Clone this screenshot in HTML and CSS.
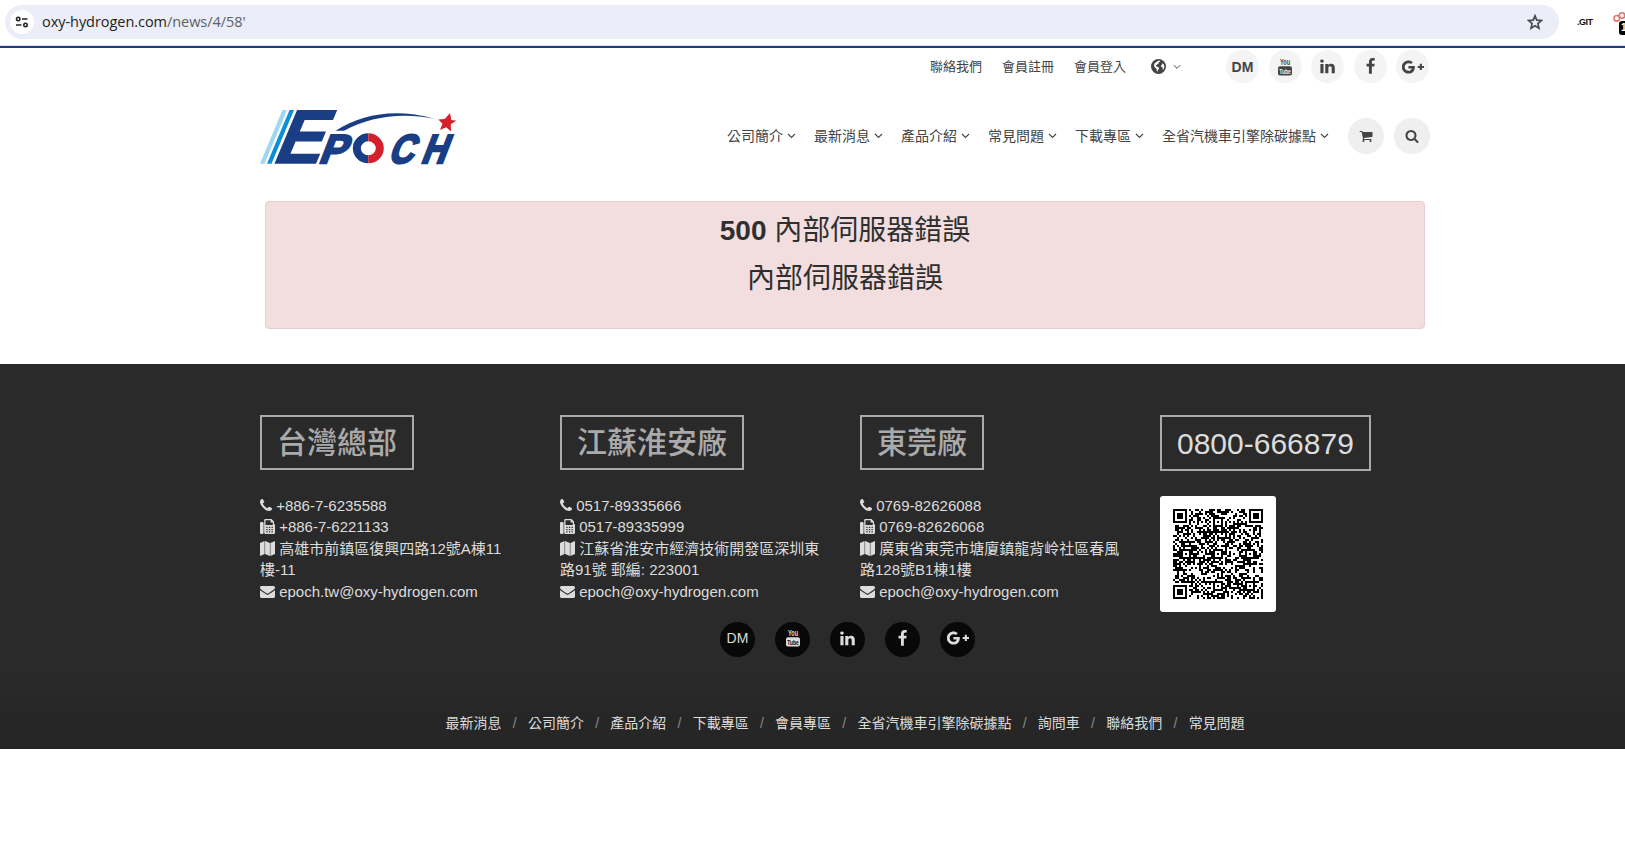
FILE: index.html
```html
<!DOCTYPE html>
<html lang="zh-Hant">
<head>
<meta charset="utf-8">
<title>EPOCH</title>
<link rel="stylesheet" href="styles.css">
</head>
<body>
<svg class="defs" aria-hidden="true">
  <symbol id="chev" viewBox="0 0 9 6"><path d="M1 1l3.5 3.5L8 1" fill="none" stroke="currentColor" stroke-width="1.1"/></symbol>
  <symbol id="phone" viewBox="0 0 1408 1408"><path d="M1408 1112q0 27-10 70.5t-21 68.5q-21 50-122 106-94 51-186 51-27 0-53-3.5t-57.5-12.5-47-14.5-55.5-20.5-49-18q-98-35-175-83-127-79-264-216t-216-264q-48-77-83-175-3-9-18-49t-20.5-55.5-14.5-47-12.5-57.5-3.5-53q0-92 51-186 56-101 106-122 25-11 68.5-21t70.5-10q14 0 21 3 18 6 53 76 11 19 30 54t35 63.5 31 53.5q3 4 17.5 25t21.5 35.5 7 28.5q0 20-28.5 50t-62 55-62 53-28.5 46q0 9 5 22.5t8.5 20.5 14 24 11.5 19q76 137 174 235t235 174q2 1 19 11.5t24 14 20.5 8.5 22.5 5q18 0 46-28.5t53-62 55-62 50-28.5q14 0 28.5 7t35.5 21.5 25 17.5q25 15 53.5 31t63.5 35 54 30q70 35 76 53 3 7 3 21z"/></symbol>
  <symbol id="fax" viewBox="0 0 15 15"><path fill-rule="evenodd" d="M1.2 3H2.400q1.200 0 1.200 1.200V13.800Q3.600 15 2.400 15H1.200Q0 15 0 13.800V4.200Q0 3 1.200 3zM4.200 1Q4.200 0 5.200 0H11.500l2.500 2.500v2.200q1 .4 1 1.500V13.500Q15 15 13.500 15H5.700Q4.200 15 4.200 13.500zM5.500 1.200V6H12.800V3.600H10.600V1.200zM6.300 7.700h1.300v1.200H6.300zm2.600 0h1.300v1.200H8.900zm2.600 0h1.300v1.200h-1.300zM6.300 10h1.300v1.200H6.300zm2.600 0h1.300v1.200H8.900zm2.600 0h1.300v1.200h-1.300zM6.300 12.300h1.300v1.200H6.300zm2.600 0h1.300v1.200H8.900zm2.600 0h1.300v1.200h-1.300z"/></symbol>
  <symbol id="map" viewBox="0 0 15 15"><path d="M0 2L4.600 0V13L0 15zM5.100 0L9.900 2V15L5.100 13zM10.400 2L15 0V13L10.400 15z"/></symbol>
  <symbol id="mail" viewBox="0 256 1792 1408"><path d="M1792 710v794q0 66-47 113t-113 47h-1472q-66 0-113-47t-47-113v-794q44 49 101 87 362 246 497 345 57 42 92.500 65.500t94.500 48 110 24.500h2q51 0 110-24.500t94.500-48 92.500-65.500q170-123 498-345 57-39 100-87zm0-294q0 79-49 151t-122 123q-376 261-468 325-10 7-42.500 31t-54 38.500-52 32.500-57.500 27-50 9h-2q-23 0-50-9t-57.500-27-52-32.500-54-38.500-42.500-31q-91-64-262-182.500t-205-142.500q-62-42-117-115.500t-55-136.500q0-78 41.500-130t118.500-52h1472q65 0 112.500 47t47.500 113z"/></symbol>
  <symbol id="search" viewBox="0 0 1792 1792"><path d="M1216 832q0-185-131.500-316.500t-316.500-131.500-316.500 131.500-131.500 316.500 131.500 316.500 316.500 131.500 316.500-131.500 131.500-316.500zm512 832q0 52-38 90t-90 38q-54 0-90-38l-343-342q-179 124-399 124-143 0-273.500-55.500t-225-150-150-225-55.500-273.500 55.500-273.500 150-225 225-150 273.500-55.500 273.500 55.500 225 150 150 225 55.500 273.500q0 220-124 399l343 343q37 37 37 90z"/></symbol>
  <symbol id="cart" viewBox="0 0 1792 1792"><path d="M704 1536q0 52-38 90t-90 38-90-38-38-90 38-90 90-38 90 38 38 90zm896 0q0 52-38 90t-90 38-90-38-38-90 38-90 90-38 90 38 38 90zm128-1088v512q0 24-16.500 42.500t-40.500 21.500l-1044 122q13 60 13 70 0 16-24 64h920q26 0 45 19t19 45-19 45-45 19h-1024q-26 0-45-19t-19-45q0-11 8-31.500t16-36 21.500-40 15.500-29.500l-177-823h-204q-26 0-45-19t-19-45 19-45 45-19h256q16 0 28.500 6.500t19.500 15.500 13 24.500 8 26 5.500 29.500 4.500 26h1201q26 0 45 19t19 45z"/></symbol>
  <symbol id="fb" viewBox="0 0 1792 1792"><path d="M1343 12v264h-157q-86 0-116 36t-30 108v189h293l-39 296h-254v759h-306v-759h-255v-296h255v-218q0-186 104-288.500t277-102.500q147 0 228 12z"/></symbol>
  <symbol id="in" viewBox="0 0 1792 1792"><path d="M477 625v991h-330v-991h330zm21-306q1 73-50.500 122t-135.500 49h-2q-82 0-132-49t-50-122q0-74 51.500-122.500t134.500-48.500 133 48.500 51 122.500zm1166 729v568h-329v-530q0-105-40.500-164.500t-126.500-59.500q-63 0-105.500 34.500t-63.500 85.500q-11 30-11 81v553h-329q2-399 2-647t-1-296l-1-48h329v144h-2q20-32 41-56t56.500-52 87-43.500 114.500-15.500q171 0 275 113.500t104 332.500z"/></symbol>
  <symbol id="gp" viewBox="0 4 24 16"><path d="M7 10.800v2.700h3.700c-.3 1.100-1.400 2.700-3.700 2.700-2.300 0-4.100-1.900-4.100-4.200S4.700 7.800 7 7.800c1.300 0 2.200.5 2.700 1L11.800 6.700C10.500 5.500 8.900 4.800 7 4.800c-3.900 0-7.200 3.200-7.200 7.200s3.200 7.200 7.200 7.200c4.200 0 7-2.900 7-7 0-.5-.1-1-.2-1.400H7zm17 0h-2.300V8.500h-2.300v2.300h-2.300v2.300h2.300v2.300h2.300v-2.300H24z"/></symbol>
  <symbol id="globe" viewBox="0 0 15 15"><circle cx="7.500" cy="7.500" r="7.500"/><path fill="#fff" d="M8 1.500L9.300 2 8.600 3 7.500 3.300 7.900 4.200 6.500 5 5.600 6.100 4.800 6.300 5.600 7.500 7.200 8 8.200 9.500 7 11 6.700 12.500 6 12.300 5.400 9.800 3.700 8.200 3 6.400 3.400 4.800 5.200 3zM11 4.700l1.100-.2 1 1.800.2 2-1.100 2.400-.5-.4-.2-2-1.300-.6-.2-1.300 1.100-.8z"/></symbol>
</svg>

<div class="browser">
  <div class="pill">
    <span class="site"><svg class="line" width="14" height="12" viewBox="0 0 14 12" stroke="#222" stroke-width="1.600"><circle cx="3.200" cy="3" r="1.700"/><path d="M7 3h5.500M1 9h5.500"/><circle cx="10.500" cy="9" r="1.700"/></svg></span>
    <span class="url">oxy-hydrogen.com<span class="path">/news/4/58'</span></span>
    <svg class="star line" width="16" height="16" viewBox="0 0 16 16" stroke="#484b50" stroke-width="1.700"><path d="M8 1.800l1.800 4.300 4.700.4-3.600 3.100 1.100 4.600L8 11.800l-4 2.400 1.100-4.600L1.500 6.500l4.700-.4z"/></svg>
  </div>
  <span class="git">.GIT</span>
  <span class="ext"><svg class="line" width="14" height="11" viewBox="0 0 14 11" stroke="#e2756f" stroke-width="1.600"><circle cx="3.800" cy="6.300" r="2.800"/><circle cx="9" cy="3.500" r="2.700"/></svg><b class="badge">1</b></span>
</div>

<header class="wrap">
  <div class="top">
    <a>聯絡我們</a><a>會員註冊</a><a>會員登入</a>
    <span class="lang"><svg width="15" height="15"><use href="#globe"/></svg><svg width="8" height="6"><use href="#chev"/></svg></span>
    <div class="round">
      <span class="dm">DM</span>
      <span><svg class="yt" width="14" height="18" viewBox="0 0 14 18"><text transform="translate(2 7.300) scale(.66 1)">You</text><rect y="8.300" width="14" height="9.200" rx="2"/><text class="tube" transform="translate(1.300 16) scale(.62 1)">Tube</text></svg></span>
      <span><svg width="17" height="17"><use href="#in"/></svg></span>
      <span><svg width="17" height="17"><use href="#fb"/></svg></span>
      <span><svg width="22" height="16"><use href="#gp"/></svg></span>
    </div>
  </div>
  <div class="main">
    <svg class="logo" width="200" height="60" viewBox="18 16 200 60">
      <path fill="#9fd6f2" d="M42.500 20h4.500L24.500 73.700h-4.500z"/><path fill="#0a8fd8" d="M49.500 20h4.500L31.500 73.700h-4.500z"/>
      <g class="letters"><text class="big" transform="matrix(.94 0 -.42 1 30.800 73.200)">E</text>
      <text class="small" transform="matrix(.98 0 -.386 1 77.800 72.800)">P</text>
      <text class="small" transform="matrix(.85 0 -.386 1 147.300 72.700)">C</text>
      <text class="small" transform="matrix(.84 0 -.386 1 180 72.800)">H</text></g>
      <path fill="#1a3e85" d="M95.500 40.700C123 24 155 18 194.500 28.800 160 22 130 27 104 40.700z"/>
      <path fill="none" stroke="#1a3e85" stroke-width="8" d="M128.300 47.300a11.500 11 0 0 0 0 22"/><path fill="none" stroke="#d3202a" stroke-width="8" d="M128.300 47.300a11.500 11 0 0 1 0 22"/>
      <path fill="#d3202a" d="M210 23l1.300 7 5 .7-5.600 3.600.4 7.200-4.900-4.300-6.200 2.800 2.500-6.300-4.200-4.200 6.500-.6z"/>
    </svg>
    <nav>
      <a>公司簡介<svg width="9" height="6"><use href="#chev"/></svg></a><a>最新消息<svg width="9" height="6"><use href="#chev"/></svg></a><a>產品介紹<svg width="9" height="6"><use href="#chev"/></svg></a><a>常見問題<svg width="9" height="6"><use href="#chev"/></svg></a><a>下載專區<svg width="9" height="6"><use href="#chev"/></svg></a><a>全省汽機車引擎除碳據點<svg width="9" height="6"><use href="#chev"/></svg></a>
    </nav>
    <span class="btn"><svg width="14" height="14"><use href="#cart"/></svg></span>
    <span class="btn"><svg width="14" height="14"><use href="#search"/></svg></span>
  </div>
</header>

<section class="alert"><h2><b>500</b> 內部伺服器錯誤</h2><h2>內部伺服器錯誤</h2></section>

<footer>
  <div class="cols">
    <div><h3>台灣總部</h3>
      <p><svg class="ph" width="12" height="12"><use href="#phone"/></svg> +886-7-6235588<br><svg width="15" height="15"><use href="#fax"/></svg> +886-7-6221133<br><svg width="15" height="15"><use href="#map"/></svg> 高雄市前鎮區復興四路12號A棟11<br>樓-11<br><svg class="ml" width="15" height="12"><use href="#mail"/></svg> epoch.tw@oxy-hydrogen.com</p></div>
    <div><h3>江蘇淮安廠</h3>
      <p><svg class="ph" width="12" height="12"><use href="#phone"/></svg> 0517-89335666<br><svg width="15" height="15"><use href="#fax"/></svg> 0517-89335999<br><svg width="15" height="15"><use href="#map"/></svg> 江蘇省淮安市經濟技術開發區深圳東<br>路91號 郵編: 223001<br><svg class="ml" width="15" height="12"><use href="#mail"/></svg> epoch@oxy-hydrogen.com</p></div>
    <div><h3>東莞廠</h3>
      <p><svg class="ph" width="12" height="12"><use href="#phone"/></svg> 0769-82626088<br><svg width="15" height="15"><use href="#fax"/></svg> 0769-82626068<br><svg width="15" height="15"><use href="#map"/></svg> 廣東省東莞市塘廈鎮龍背岭社區春風<br>路128號B1棟1樓<br><svg class="ml" width="15" height="12"><use href="#mail"/></svg> epoch@oxy-hydrogen.com</p></div>
    <div><h3 class="tel">0800-666879</h3><div class="qr"><svg id="qr" width="90" height="90" viewBox="0 0 45 45" shape-rendering="crispEdges"></svg></div></div>
  </div>
  <div class="round dark">
    <span class="dm">DM</span>
    <span><svg class="yt" width="14" height="18" viewBox="0 0 14 18"><text transform="translate(2 7.300) scale(.66 1)">You</text><rect y="8.300" width="14" height="9.200" rx="2"/><text class="tube" transform="translate(1.300 16) scale(.62 1)">Tube</text></svg></span>
    <span><svg width="17" height="17"><use href="#in"/></svg></span>
    <span><svg width="17" height="17"><use href="#fb"/></svg></span>
    <span><svg width="22" height="16"><use href="#gp"/></svg></span>
  </div>
  <div class="links"><a>最新消息</a><i>/</i><a>公司簡介</a><i>/</i><a>產品介紹</a><i>/</i><a>下載專區</a><i>/</i><a>會員專區</a><i>/</i><a>全省汽機車引擎除碳據點</a><i>/</i><a>詢問車</a><i>/</i><a>聯絡我們</a><i>/</i><a>常見問題</a></div>
</footer>
<script src="qr.js"></script>
</body>
</html>
```
FILE: styles.css
```css
* { box-sizing: border-box; }
body { margin: 0; background: #fff; color: #444; font-family: "Liberation Sans", "Noto Sans CJK TC", sans-serif; width: 1625px; overflow-x: hidden; }
svg { fill: currentColor; flex: none; }
svg.line { fill: none; }
.defs { display: none; }
.browser { height: 48px; border-bottom: 2px solid #1a3e85; box-shadow: inset 0 -1px #dfe1e5; display: flex; align-items: center; padding: 0 0 2px 5px; overflow: hidden; }
.pill { width: 1554px; height: 34px; border-radius: 17px; background: #ebeef8; display: flex; align-items: center; padding: 0 16px 0 5px; }
.site { width: 24px; height: 24px; border-radius: 50%; background: #fff; display: flex; align-items: center; justify-content: center; }
.url { margin-left: 8px; font: 14.5px/20px "Open Sans", "Noto Sans", sans-serif; color: #222; letter-spacing: -.05px; }
.path { color: #5c5f64; }
.star { margin-left: auto; }
.git { margin-left: 18px; font: bold 9px/12px "Liberation Sans", sans-serif; width: 16px; letter-spacing: -.5px; color: #111; }
.ext { margin-left: 20px; position: relative; height: 20px; width: 12px; flex: none; }
.ext svg { display: block; overflow: visible; }
.badge { position: absolute; left: 6px; top: 9px; width: 14px; height: 14px; border-radius: 3px; background: #000; color: #fff; font-size: 10px; line-height: 14px; padding-left: 2px; }
.wrap { margin-left: 260px; width: 1170px; }
.top { height: 37px; display: flex; align-items: center; justify-content: flex-end; font-size: 13px; line-height: 20px; padding-right: 1px; }
.top a { margin-right: 20px; }
.lang { display: flex; align-items: center; gap: 7px; margin: 0 45px 0 5px; }
.round { display: flex; gap: 9.500px; flex: none; }
.round span { width: 33px; height: 33px; border-radius: 50%; background: #f4f4f4; display: flex; align-items: center; justify-content: center; }
.dm { font-size: 14px; font-weight: bold; }
.yt text { font: bold 8.500px "Liberation Sans", sans-serif; }
.yt .tube { fill: #f4f4f4; font-size: 8px; }
.main { display: flex; align-items: center; height: 102px; }
.logo { margin-left: -2px; overflow: visible; }
.letters { fill: #1a3e85; stroke: #1a3e85; }
.big { font: bold 76px "Liberation Sans", sans-serif; stroke-width: 1.600px; }
.small { font: bold 40.500px "Liberation Sans", sans-serif; stroke-width: 2.400px; }
nav { display: flex; gap: 18px; margin-left: auto; font-size: 14px; line-height: 20px; }
nav a { display: flex; align-items: center; gap: 4px; }
.btn { width: 36px; height: 36px; border-radius: 50%; background: #efefef; display: flex; align-items: center; justify-content: center; margin-left: 10px; }
nav + .btn { margin-left: 19px; }
.alert { margin: 14px 0 0 265px; width: 1160px; height: 128px; border: 1px solid #ebccd1; border-radius: 4px; background: #f2dede; color: #2f2f2f; text-align: center; padding-top: 5px; }
.alert h2 { margin: 0; font-size: 28px; line-height: 48px; font-weight: 400; }
footer { margin-top: 35px; height: 385px; background: linear-gradient(#2a2a2a 80%, #262626 92%); color: #dcdcdc; display: flex; flex-direction: column; padding-top: 51px; }
.cols { margin-left: 260px; display: grid; grid-template-columns: repeat(4, 300px); height: 207px; flex: none; }
h3 { margin: 0 0 25px; width: max-content; height: 55px; border: 2px solid #aaa; padding: 0 15px; font-size: 30px; line-height: 52px; font-weight: 500; color: #aaa; }
.tel { font-weight: 400; height: 56px; line-height: 53px; color: #dcdcdc; }
.cols p { margin: 0; font-size: 15px; line-height: 21.430px; white-space: nowrap; }
.cols p svg { vertical-align: -2px; }
.cols p .ph { vertical-align: 0; }
.cols p .ml { vertical-align: -1px; }
.qr { width: 116px; height: 116px; background: #fff; border-radius: 3px; padding: 13px; color: #000; }
.qr svg { display: block; }
.dark { margin-left: 720px; gap: 20px; }
.dark span { width: 35px; height: 35px; background: #080808; padding-bottom: 3px; }
.dark .dm { font-weight: 400; }
.dark .yt .tube { fill: #080808; }
.links { margin-top: auto; height: 53px; display: flex; padding-left: 445.500px; align-items: center; font-size: 14px; line-height: 20px; white-space: nowrap; }
.links i { font-style: normal; width: 26.400px; text-align: center; color: #888; }
```
FILE: qr.js
```js
// Builds the 45-module code: finders, alignment marks, timing lines and data modules.
const N = 45, marks = [6, 22, 38];
let seed = 7919, d = '';
const rand = () => (seed = (seed * 16807) % 2147483647) / 2147483647;
function module(x, y) {
  const noise = rand() < 0.52;
  for (const [fx, fy] of [[3, 3], [41, 3], [3, 41]]) {
    const r = Math.max(Math.abs(x - fx), Math.abs(y - fy));
    if (r <= 4) return r !== 2 && r !== 4;
  }
  for (const ax of marks) for (const ay of marks) {
    if ((ax === 6 && ay !== 22) || (ay === 6 && ax !== 22)) continue;
    const r = Math.max(Math.abs(x - ax), Math.abs(y - ay));
    if (r <= 2) return r !== 1;
  }
  if (x === 6 || y === 6) return (x + y) % 2 === 0;
  return noise;
}
for (let y = 0; y < N; y++) for (let x = 0; x < N; x++) if (module(x, y)) d += `M${x} ${y}h1v1h-1z`;
const path = document.createElementNS('http://www.w3.org/2000/svg', 'path');
path.setAttribute('d', d);
document.getElementById('qr').append(path);
```
